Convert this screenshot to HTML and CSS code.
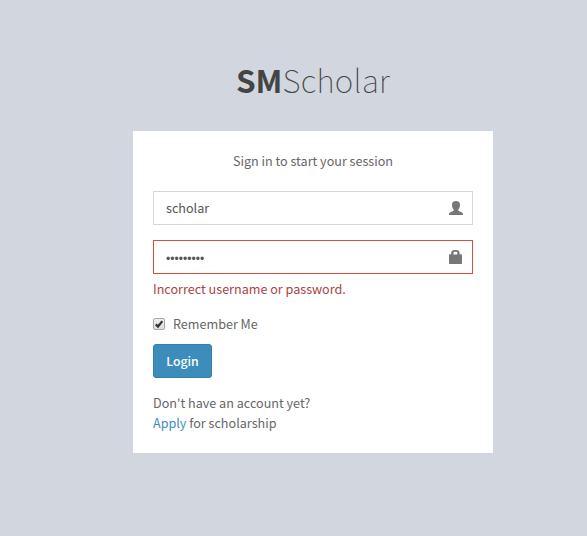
FILE: index.html
```html
<!DOCTYPE html>
<html lang="en">
<head>
<meta charset="utf-8">
<title>SMScholar</title>
<link rel="stylesheet" href="styles.css">
</head>
<body>
<main class="login-box">
  <h1 class="login-logo"><b>SM</b><span class="logo-light">Scholar</span></h1>
  <form class="login-body">
    <p class="login-msg">Sign in to start your session</p>
    <div class="field">
      <input class="control" type="text" value="scholar" aria-label="Username">
      <svg class="field-icon" viewBox="0 0 14 14"><path d="M7 0C9.7 0 11.1 1.4 11 3.8C11.1 5.8 10.4 7.4 9.4 8.2V9.5C9.8 10.6 13.9 10.9 14 13V14H0V13C.1 10.9 4.2 10.6 4.6 9.5V8.2C3.6 7.4 2.9 5.8 3 3.8C2.9 1.4 4.3 0 7 0Z"/></svg>
    </div>
    <div class="field field-error">
      <input class="control password" type="password" value="password1" aria-label="Password">
      <svg class="field-icon" viewBox="0 0 14 14"><path fill-rule="evenodd" d="M2.2 4.3V3C2.2 1.2 3.5 0 5.3 0H7.5C9.3 0 10.6 1.2 10.6 3V4.3H12.3Q13 4.3 13 5V13.3Q13 14 12.3 14H.7Q0 14 0 13.3V5Q0 4.3 .7 4.3ZM4.5 4.5H8.3V3Q8.3 1.7 7.2 1.7H5.6Q4.5 1.7 4.5 3Z"/></svg>
      <span class="help">Incorrect username or password.</span>
    </div>
    <label class="remember">
      <input class="check-input" type="checkbox" checked>
      <svg class="check" viewBox="0 0 12 12"><defs><linearGradient id="g" x2="0" y2="1"><stop stop-color="#f0f0f0"/><stop offset="1" stop-color="#dcdcdc"/></linearGradient></defs><rect x=".5" y=".5" width="11" height="11" rx="1.5" fill="url(#g)" stroke="#a9a9a9"/><path d="M2.8 6.4L5 8.5L9.3 3.1" fill="none" stroke="#333" stroke-width="2.2"/></svg>
      <span>Remember Me</span>
    </label>
    <button class="login-btn" type="button">Login</button>
    <p class="signup">Don't have an account yet?<br><a href="#">Apply</a> for scholarship</p>
  </form>
</main>
</body>
</html>
```
FILE: styles.css
```css
* { box-sizing: border-box; }
body {
  margin: 0;
  min-height: 536px;
  background: #d2d6de;
  color: #666;
  font-family: "Noto Sans CJK SC", "Noto Sans", sans-serif;
  font-size: 12.6px;
  line-height: 20px;
}
.login-box { width: 360px; margin-left: 133px; padding-top: 54px; }
.login-logo {
  margin: 0 0 27px;
  text-align: center;
  color: #444;
  font-size: 31.5px;
  line-height: 50px;
  font-weight: 100;
}
.login-logo b { font-weight: 700; }
.logo-light { letter-spacing: 0.3px; }
.login-body { height: 322px; padding: 20px; background: #fff; }
.login-msg { margin: 0 0 20px; text-align: center; }
.field { position: relative; margin-bottom: 15px; }
.control {
  display: block;
  width: 100%;
  height: 34px;
  padding: 5px 42px 7px 12px;
  border: 1px solid #d2d6de;
  border-radius: 0;
  background: #fff;
  color: #555;
  font: inherit;
  outline: 0;
}
.password { padding-top: 8px; padding-bottom: 4px; font-family: "Liberation Sans", sans-serif; font-size: 12px; letter-spacing: 0.05px; }
.field-icon { position: absolute; top: 10px; right: 10px; width: 14px; height: 14px; fill: #777; }
.field-error .control { border-color: #dd4b39; }
.help { display: block; margin-top: 5px; color: #a94442; }
.remember { display: flex; align-items: center; height: 20px; margin-bottom: 10px; }
.check-input { position: absolute; opacity: 0; }
.check { width: 12px; height: 12px; margin-right: 8px; }
.login-btn {
  display: block;
  width: 59px;
  height: 34px;
  padding: 0;
  border: 1px solid #367fa9;
  border-radius: 3px;
  background: #3c8dbc;
  color: #fff;
  font: inherit;
  font-size: 12.3px;
  font-weight: 500;
}
.signup { margin: 15px 0 0; }
.signup a { color: #3c8dbc; text-decoration: none; }
```
